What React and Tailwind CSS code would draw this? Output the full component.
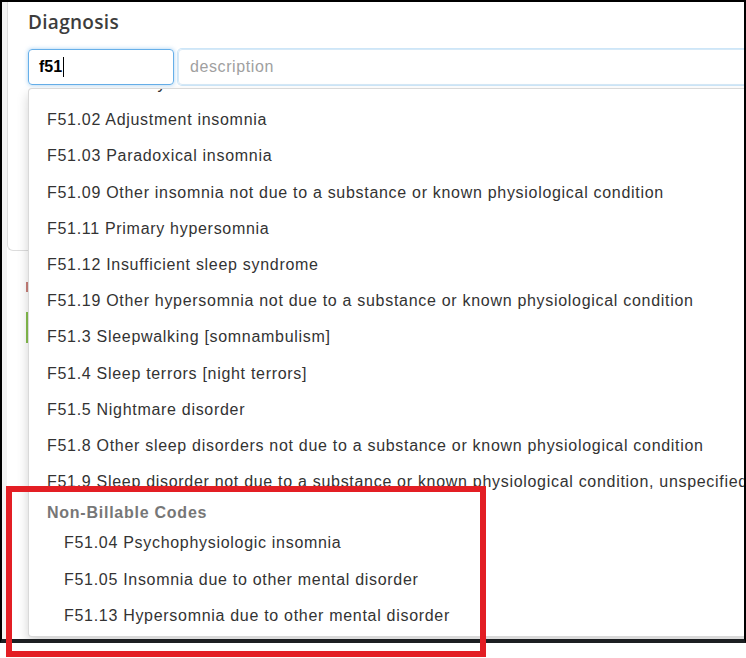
const billable = [
  'F51.01 Primary insomnia',
  'F51.02 Adjustment insomnia',
  'F51.03 Paradoxical insomnia',
  'F51.09 Other insomnia not due to a substance or known physiological condition',
  'F51.11 Primary hypersomnia',
  'F51.12 Insufficient sleep syndrome',
  'F51.19 Other hypersomnia not due to a substance or known physiological condition',
  'F51.3 Sleepwalking [somnambulism]',
  'F51.4 Sleep terrors [night terrors]',
  'F51.5 Nightmare disorder',
  'F51.8 Other sleep disorders not due to a substance or known physiological condition',
  'F51.9 Sleep disorder not due to a substance or known physiological condition, unspecified',
]

const nonBillable = [
  'F51.04 Psychophysiologic insomnia',
  'F51.05 Insomnia due to other mental disorder',
  'F51.13 Hypersomnia due to other mental disorder',
]

const arial = { fontFamily: '"Liberation Sans", Arial, sans-serif' }

export default function App() {
  return (
    <div className="relative h-[658px] w-[746px] overflow-hidden bg-white">
      <div className="relative h-[643px] w-[746px] overflow-hidden border-x-2 border-t-2 border-b-4 border-x-black border-t-black border-b-[#1c1f22] bg-[#f3f3f3]">
        <div className="ml-[5px] h-full bg-white">
          <div
            className="h-[249px] w-[900px] rounded-bl-md border-b border-l border-[#dddddd] pl-5 pt-[7px]"
            style={{ fontFamily: '"Open Sans", sans-serif' }}
          >
            <h2 className="text-[19px] font-semibold leading-[26px] tracking-[0.3px] text-[#3d3d3d]">Diagnosis</h2>
            <div className="mt-[14px] flex gap-1" style={arial}>
              <div className="flex h-9 w-[146px] items-center rounded border border-[#66afe9] pl-[10px] shadow-[0_0_4px_rgba(102,175,233,0.6)]">
                <span className="text-base font-bold text-black">f51</span>
                <span className="ml-px h-5 w-px bg-black" />
              </div>
              <div className="flex h-9 flex-1 items-center rounded border border-[#d6e9f7] pl-[11px] shadow-[0_0_0_1px_#cde6f8]">
                <span className="text-base tracking-[0.6px] text-[#a0a0a0]">description</span>
              </div>
            </div>
          </div>

          <div className="pl-[19px]">
            <div className="mt-[31px] h-[10px] w-[40px] bg-[#c9807a]" />
            <div className="mt-5 h-[31px] w-[100px] border-l-2 border-[#86bf4e]" />
          </div>
        </div>

        <div
          className="absolute left-[26px] top-[86px] h-[549px] w-[760px] overflow-hidden rounded border border-[rgba(0,0,0,0.15)] bg-white text-[#333333] shadow-[0_6px_12px_rgba(0,0,0,0.175)]"
          style={arial}
        >
          <ul className="mt-[-23px] tracking-[0.7px]">
            {billable.map((item) => (
              <li key={item} className="flex h-[36.2px] items-center whitespace-nowrap pl-[18px] text-base">
                {item}
              </li>
            ))}
            <li className="flex h-[25px] items-center whitespace-nowrap pl-[18px] text-base font-bold tracking-[0.75px] text-[#777777]">
              Non-Billable Codes
            </li>
            {nonBillable.map((item) => (
              <li key={item} className="flex h-[36.2px] items-center whitespace-nowrap pl-[35px] text-base">
                {item}
              </li>
            ))}
          </ul>
        </div>
      </div>

      <div className="absolute left-[6px] top-[486px] h-[171px] w-[480px] border-[6px] border-[#e31e24]" />
    </div>
  )
}
